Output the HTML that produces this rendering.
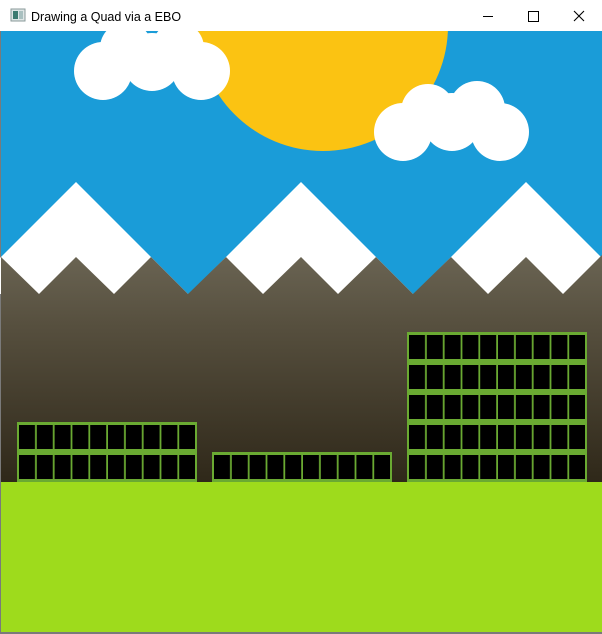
<!DOCTYPE html>
<html><head><style>
html,body{margin:0;padding:0;width:602px;height:634px;overflow:hidden;background:#fff}
svg{display:block}
</style></head><body>
<svg width="602" height="634" viewBox="0 0 602 634" xmlns="http://www.w3.org/2000/svg">
<defs>
<linearGradient id="br" x1="0" y1="0" x2="0" y2="1" gradientUnits="objectBoundingBox">
<stop offset="0" stop-color="#6a6453"/>
<stop offset="0.3" stop-color="#57503f"/>
<stop offset="1" stop-color="#2f2819"/>
</linearGradient>
<pattern id="w1" x="19" y="425" width="17.8" height="30" patternUnits="userSpaceOnUse"><rect width="16" height="24" fill="#000"/></pattern>
<pattern id="w2" x="214" y="455" width="17.8" height="30" patternUnits="userSpaceOnUse"><rect width="16" height="24" fill="#000"/></pattern>
<pattern id="w3" x="409" y="335" width="17.8" height="30" patternUnits="userSpaceOnUse"><rect width="16" height="24" fill="#000"/></pattern>
</defs>
<rect x="0" y="0" width="602" height="634" fill="#fff"/>
<rect x="0" y="31" width="602" height="603" fill="#7a7a7a"/>
<g>
<rect x="1" y="31" width="601" height="601" fill="#1a9cd8"/>
<circle cx="323" cy="26" r="125" fill="#fbc312"/>
<g fill="#fff">
<circle cx="103" cy="71" r="29"/><circle cx="152" cy="62" r="29"/><circle cx="201" cy="71" r="29"/>
<circle cx="126" cy="48" r="26"/><circle cx="178" cy="48" r="26"/>
<circle cx="403" cy="132" r="29"/><circle cx="452" cy="122" r="29"/><circle cx="500" cy="132" r="29"/>
<circle cx="428" cy="111" r="27"/><circle cx="477" cy="109" r="28"/>
</g>
</g>
<g fill="#fff">
<polygon points="-36,294 76,182 188,294"/>
<polygon points="189,294 301,182 413,294"/>
<polygon points="414,294 526,182 638,294"/>
</g>
<polygon fill="url(#br)" points="1,257 39,294 76,257 114,294 151,257 188,294 226,257 263,294 301,257 338,294 376,257 413,294 451,257 488,294 526,257 563,294 602,255 602,482 1,482"/>
<rect x="17" y="422" width="180" height="60" fill="#6aaa32"/>
<rect x="19" y="425" width="176" height="55" fill="url(#w1)"/>
<rect x="212" y="452" width="180" height="30" fill="#6aaa32"/>
<rect x="214" y="455" width="176" height="25" fill="url(#w2)"/>
<rect x="407" y="332" width="180" height="150" fill="#6aaa32"/>
<rect x="409" y="335" width="176" height="145" fill="url(#w3)"/>
<rect x="1" y="482" width="601" height="150" fill="#9edb1c"/>
<rect x="0" y="0" width="602" height="31" fill="#fff"/>
<rect x="11" y="9" width="14" height="12" fill="#dfe6e6" stroke="#8a9a9a" stroke-width="1"/>
<rect x="13" y="11" width="5" height="8" fill="#3c7a70"/>
<rect x="19" y="11" width="4" height="8" fill="#a9c0c0"/>
<text x="31" y="21" font-family="Liberation Sans, sans-serif" font-size="12.5" fill="#000">Drawing a Quad via a EBO</text>
<line x1="483" y1="16.5" x2="493" y2="16.5" stroke="#000" stroke-width="1"/>
<rect x="528.5" y="11.5" width="10" height="10" fill="none" stroke="#000" stroke-width="1"/>
<path d="M574 11 L584 21 M584 11 L574 21" stroke="#000" stroke-width="1.1"/>
</svg>
</body></html>
